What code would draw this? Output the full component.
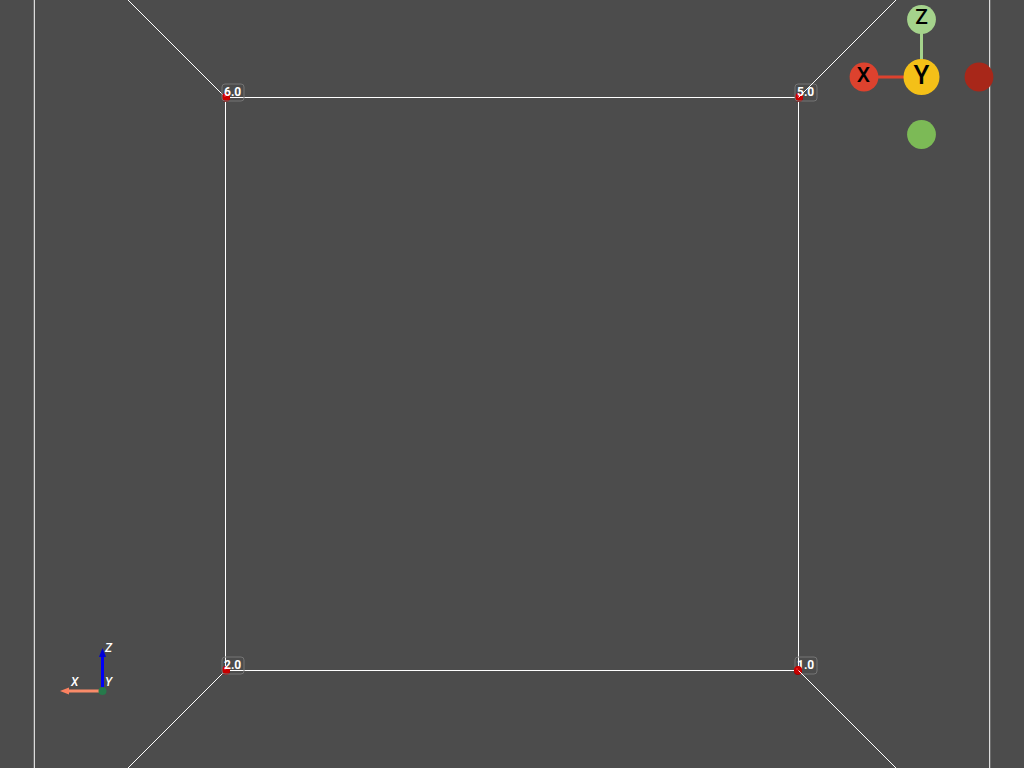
type PointLabel = { text: string; x: number; y: number; boxX: number; boxY: number; markerOnTop?: boolean };

const points: PointLabel[] = [
  { text: "6.0", x: 226, y: 97, boxX: 222, boxY: 84 },
  { text: "5.0", x: 799, y: 97, boxX: 795, boxY: 84 },
  { text: "2.0", x: 226, y: 670, boxX: 222, boxY: 657 },
  { text: "1.0", x: 798, y: 670, boxX: 795, boxY: 657, markerOnTop: true },
];

function Marker({ x, y }: { x: number; y: number }) {
  return (
    <g>
      <circle cx={x} cy={y + 1} r="4" fill="#980000" />
      <circle cx={x} cy={y} r="4" fill="#c80000" />
      <circle cx={x - 1} cy={y - 1} r="1" fill="#f02020" />
    </g>
  );
}

function Scene() {
  return (
    <svg
      className="absolute inset-0 h-full w-full"
      viewBox="0 0 1024 768"
      preserveAspectRatio="xMidYMid slice"
      role="img"
      aria-label="Wireframe cube"
    >
      <g fill="none" stroke="#ffffff">
        <rect x="225.5" y="97.5" width="573" height="573" />
        <path d="M128 0L225.5 97.5M128 768L225.5 670.5" />
        <path d="M34.3 0V768M989.7 0V768" />
      </g>
      {points.filter((p) => !p.markerOnTop).map((p) => (
        <Marker key={p.text} x={p.x} y={p.y} />
      ))}
      {points.map((p) => (
        <g key={p.text}>
          <rect x={p.boxX} y={p.boxY} width="22" height="17" rx="3" fill="none" stroke="#747474" />
          <text x={p.boxX + 2} y={p.boxY + 12} fill="#ffffff" className="font-[Roboto,sans-serif] text-[12px] font-bold">
            {p.text}
          </text>
        </g>
      ))}
      {points.filter((p) => p.markerOnTop).map((p) => (
        <Marker key={p.text} x={p.x} y={p.y} />
      ))}
      <path d="M896 0L798.5 97.5M896 768L798.5 670.5" fill="none" stroke="#ffffff" />
    </svg>
  );
}

function ViewGizmo() {
  return (
    <svg className="absolute top-0 right-[24px] h-[160px] w-[160px]" viewBox="840 0 160 160" role="img" aria-label="View orientation">
      <path d="M921.5 20V77" stroke="#a5d38c" strokeWidth="3" />
      <path d="M864 77H921" stroke="#dd422e" strokeWidth="3" />
      <circle cx="921.5" cy="19.5" r="14.4" fill="#a5d38c" />
      <circle cx="864" cy="77" r="14.4" fill="#dd422e" />
      <circle cx="921.5" cy="134.5" r="14.4" fill="#7cba56" />
      <circle cx="979" cy="77" r="14.4" fill="#a82719" />
      <circle cx="921.5" cy="77" r="18" fill="#f4c018" />
      <g fill="#000000" textAnchor="middle" className="font-[Roboto,sans-serif] font-medium">
        <text x="921.5" y="24" className="text-[21px]">Z</text>
        <text x="863.5" y="82" className="text-[21px]">X</text>
        <text x="921.5" y="84" className="text-[26px]">Y</text>
      </g>
    </svg>
  );
}

function AxesTriad() {
  return (
    <svg className="absolute bottom-[68px] left-[50px] h-[65px] w-[75px]" viewBox="50 635 75 65" role="img" aria-label="Axes">
      <path d="M67 691H101" stroke="#f98b69" strokeWidth="3" />
      <path d="M60 691L69 687.5V694.5Z" fill="#fb8160" />
      <path d="M102.5 656V690" stroke="#0000f8" strokeWidth="3" />
      <path d="M102.5 648L106 657H99Z" fill="#0000d8" />
      <circle cx="102.5" cy="691" r="4" fill="#267a4b" />
      <g fill="#ffffff" className="font-[Roboto,sans-serif] text-[12px] font-medium italic">
        <text x="105" y="652">Z</text>
        <text x="71" y="686">X</text>
        <text x="105" y="686">Y</text>
      </g>
    </svg>
  );
}

export default function App() {
  return (
    <main className="relative min-h-screen w-full overflow-hidden bg-[#4c4c4c]">
      <Scene />
      <ViewGizmo />
      <AxesTriad />
    </main>
  );
}
